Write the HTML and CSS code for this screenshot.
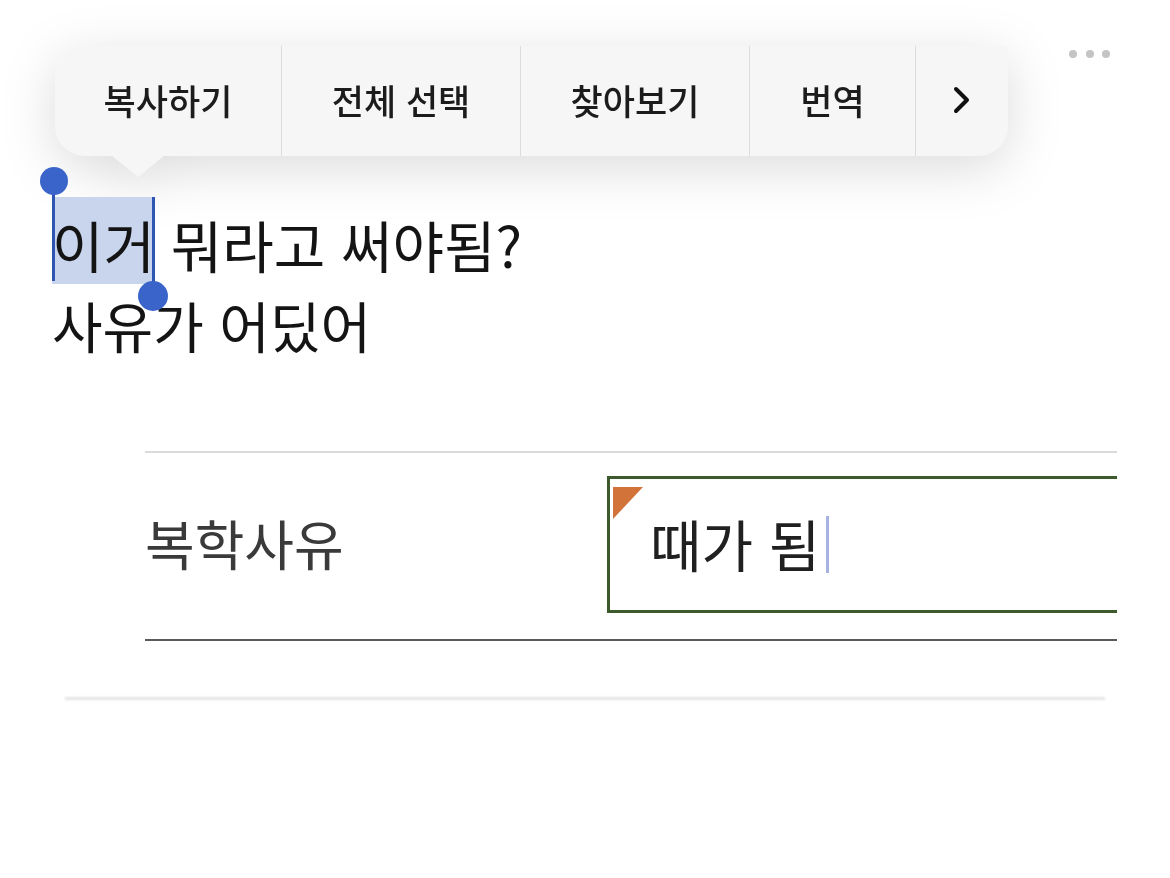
FILE: index.html
```html
<!DOCTYPE html>
<html lang="ko">
<head>
<meta charset="utf-8">
<title>복학사유</title>
<link rel="stylesheet" href="styles.css">
</head>
<body>
<div class="screen">
  <div class="menu">
    <div class="menu-bar">
      <div class="menu-item w1">복사하기</div>
      <div class="menu-item w2">전체 선택</div>
      <div class="menu-item w3">찾아보기</div>
      <div class="menu-item w4">번역</div>
      <div class="menu-item w5">
        <svg class="chev" width="22" height="30" viewBox="0 0 22 30"><polyline points="5,4 16,15 5,26" fill="none" stroke="#111" stroke-width="4" stroke-linecap="round" stroke-linejoin="round"/></svg>
      </div>
    </div>
    <div class="menu-tail"></div>
  </div>

  <div class="dots"><span></span><span></span><span></span></div>

  <div class="post">
    <p class="line"><span class="sel">이거<span class="handle start"></span><span class="handle end"></span></span> 뭐라고 써야됨?</p>
    <p class="line second">사유가 어딨어</p>
  </div>

  <div class="card">
    <div class="form-row">
      <div class="label">복학사유</div>
      <div class="field">
        <span class="flag"></span>
        <span class="value">때가 됨</span><span class="caret"></span>
      </div>
    </div>
  </div>
</div>
</body>
</html>
```

FILE: styles.css
```css
html, body {
  margin: 0;
  padding: 0;
  background: #ffffff;
}

body {
  font-family: "Noto Sans CJK KR", "Noto Sans", sans-serif;
  color: #161616;
  width: 1170px;
  height: 878px;
  overflow: hidden;
}

.screen {
  position: relative;
  width: 1170px;
  height: 878px;
  padding-top: 204px;
  box-sizing: border-box;
}

/* context menu */
.menu {
  position: absolute;
  top: 46px;
  left: 55px;
  width: 953px;
  filter: drop-shadow(0 12px 26px rgba(0, 0, 0, 0.14));
}

.menu-bar {
  display: flex;
  height: 110px;
  background: #f6f6f6;
  border-radius: 30px 4px 30px 30px;
  overflow: hidden;
}

.menu-item {
  display: flex;
  align-items: center;
  justify-content: center;
  font-size: 35px;
  font-weight: 500;
  color: #1c1c1c;
  border-right: 1px solid #dcdcdc;
  box-sizing: border-box;
  padding-bottom: 3px;
}

.w1 { width: 227px; }
.w2 { width: 239px; }
.w3 { width: 229px; }
.w4 { width: 166px; }
.w5 { flex: 1; border-right: none; padding-right: 0; }

.menu-tail {
  width: 54px;
  height: 22px;
  margin-left: 56px;
  background: #f6f6f6;
  clip-path: polygon(0 0, 100% 0, 50% 100%);
  margin-top: -1px;
}

.dots {
  position: absolute;
  top: 50px;
  left: 1069px;
  display: flex;
  gap: 8.5px;
}

.dots span {
  width: 8px;
  height: 8px;
  border-radius: 50%;
  background: #c4c4c4;
}

/* post text */
.post {
  padding-left: 52px;
}

.line {
  margin: 0;
  font-size: 56px;
  line-height: 80px;
  font-weight: 400;
  color: #141414;
  white-space: nowrap;
}

.line.second {
  font-size: 55px;
}

.sel {
  position: relative;
  background: #c9d5ec;
  padding-top: 6px;
}

.handle {
  position: absolute;
  width: 3px;
  background: #2f56b3;
}

.handle::before {
  content: "";
  position: absolute;
  width: 28px;
  height: 28px;
  border-radius: 50%;
  background: #3a64c9;
  left: -12px;
}

.handle.start {
  left: 0;
  top: -16px;
  height: 100px;
}

.handle.start::before {
  top: -14px;
}

.handle.end {
  right: 0;
  top: 0;
  height: 99px;
}

.handle.end::before {
  bottom: -15px;
  width: 30px;
  height: 30px;
  left: -14px;
}

/* card with form */
.card {
  position: relative;
  margin-top: 87px;
  margin-left: 65px;
  width: 1040px;
  padding-left: 80px;
  padding-bottom: 57px;
  box-sizing: border-box;
}

.card::after {
  content: "";
  position: absolute;
  left: 0;
  right: 0;
  bottom: -2px;
  height: 3px;
  background: #e4e4e4;
  filter: blur(1px);
}

.form-row {
  display: grid;
  grid-template-columns: 462px 510px;
  align-items: center;
  width: 972px;
  border-top: 2px solid #dadada;
  border-bottom: 2px solid #5a5a5a;
  padding: 23px 0 26px;
}

.label {
  font-size: 54px;
  font-weight: 400;
  color: #3a3a3a;
  padding-bottom: 4px;
}

.field {
  position: relative;
  display: flex;
  align-items: center;
  height: 137px;
  box-sizing: border-box;
  border: 3px solid #3d5a2d;
  border-right: none;
  padding-left: 40px;
}

.flag {
  position: absolute;
  top: 8px;
  left: 3px;
  width: 30px;
  height: 32px;
  background: #d2743a;
  clip-path: polygon(0 0, 100% 0, 0 100%);
}

.value {
  font-size: 56px;
  color: #202020;
  padding-bottom: 4px;
}

.caret {
  display: inline-block;
  width: 3px;
  height: 57px;
  margin-left: 6px;
  background: #a6b2e2;
}
```
